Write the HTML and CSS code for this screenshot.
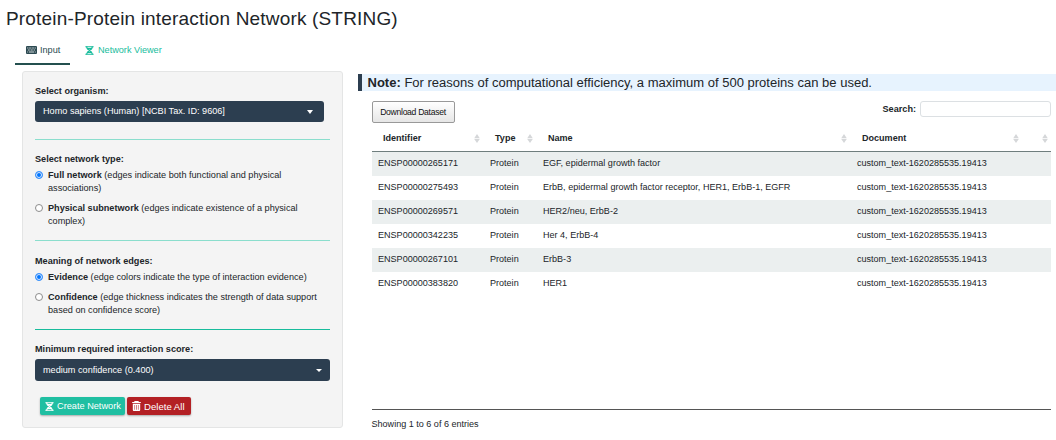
FILE: index.html
```html
<!DOCTYPE html>
<html lang="en">
<head>
<meta charset="utf-8">
<title>Protein-Protein interaction Network</title>
<link rel="stylesheet" href="styles.css">
</head>
<body>
<svg class="defs" width="0" height="0">
  <symbol id="dna" viewBox="0 0 10 10"><path d="M0.4 .8H9.6M0.4 9.2H9.6M2.3 2.9H7.7M2.3 7.1H7.7" stroke="currentColor" stroke-width="1.2" fill="none"/><path d="M1.7 .5C1.7 5 8.3 5 8.3 9.5M8.3 .5C8.3 5 1.7 5 1.7 9.5" stroke="currentColor" stroke-width="1.4" fill="none"/></symbol>
  <symbol id="trash" viewBox="0 0 10 11"><path d="M.2 1.7H9.8M3.2 1.5V.5H6.8V1.5" stroke="currentColor" stroke-width="1.2" fill="none"/><path fill-rule="evenodd" fill="currentColor" d="M.9 3H9.1V10Q9.1 11 8.1 11H1.9Q.9 11 .9 10ZM2.8 4.3V9.6H3.4V4.3ZM4.7 4.3V9.6H5.3V4.3ZM6.6 4.3V9.6H7.2V4.3Z"/></symbol>
  <symbol id="sort" viewBox="0 0 6 9"><path fill="currentColor" d="M3 0L5.8 4.2H.2ZM3 9L5.8 4.9H.2Z"/></symbol>
</svg>
<h1 class="title">Protein-Protein interaction Network (STRING)</h1>
<nav class="tabs">
  <a class="tab active"><svg class="keyboard" viewBox="0 0 11 8"><rect width="11" height="8" rx="1" fill="currentColor"/><path d="M1.3 2H9.8M1.9 4H9.2" stroke="#fff" stroke-width=".9" stroke-dasharray=".9 .6"/><path d="M1.3 6H2.2M3 6H8M8.8 6H9.7" stroke="#fff" stroke-width=".8"/></svg>Input</a>
  <a class="tab"><svg class="dna"><use href="#dna"/></svg>Network Viewer</a>
</nav>
<main class="layout">
  <form class="panel">
    <div class="label">Select organism:</div>
    <div class="select organism"><span>Homo sapiens (Human) [NCBI Tax. ID: 9606]</span><i class="caret"></i></div>
    <hr class="rule first">
    <div class="label">Select network type:</div>
    <label class="option"><i class="radio on"></i><span><b>Full network</b> (edges indicate both functional and physical<br>associations)</span></label>
    <label class="option"><i class="radio"></i><span><b>Physical subnetwork</b> (edges indicate existence of a physical<br>complex)</span></label>
    <hr class="rule second">
    <div class="label">Meaning of network edges:</div>
    <label class="option"><i class="radio on"></i><span><b>Evidence</b> (edge colors indicate the type of interaction evidence)</span></label>
    <label class="option"><i class="radio"></i><span><b>Confidence</b> (edge thickness indicates the strength of data support<br>based on confidence score)</span></label>
    <hr class="rule third">
    <div class="label">Minimum required interaction score:</div>
    <div class="select score"><span>medium confidence (0.400)</span><i class="caret small"></i></div>
    <div class="actions">
      <button type="button" class="btn create"><svg class="dna"><use href="#dna"/></svg>Create Network</button>
      <button type="button" class="btn delete"><svg class="trash"><use href="#trash"/></svg>Delete All</button>
    </div>
  </form>
  <section class="results">
    <p class="note"><b>Note:</b> For reasons of computational efficiency, a maximum of 500 proteins can be used.</p>
    <div class="data">
      <div class="toolbar">
        <button type="button" class="download">Download Dataset</button>
        <label class="search">Search:<input type="text"></label>
      </div>
      <div class="scroll">
        <table class="table">
          <colgroup><col class="c-id"><col class="c-type"><col class="c-name"><col class="c-doc"><col class="c-end"></colgroup>
          <thead><tr>
            <th><div class="head">Identifier<svg class="sort"><use href="#sort"/></svg></div></th>
            <th><div class="head">Type<svg class="sort"><use href="#sort"/></svg></div></th>
            <th><div class="head">Name<svg class="sort"><use href="#sort"/></svg></div></th>
            <th><div class="head">Document<svg class="sort"><use href="#sort"/></svg></div></th>
            <th><div class="head"><svg class="sort"><use href="#sort"/></svg></div></th>
          </tr></thead>
          <tbody>
            <tr><td>ENSP00000265171</td><td>Protein</td><td>EGF, epidermal growth factor</td><td>custom_text-1620285535.19413</td><td></td></tr>
            <tr><td>ENSP00000275493</td><td>Protein</td><td>ErbB, epidermal growth factor receptor, HER1, ErbB-1, EGFR</td><td>custom_text-1620285535.19413</td><td></td></tr>
            <tr><td>ENSP00000269571</td><td>Protein</td><td>HER2/neu, ErbB-2</td><td>custom_text-1620285535.19413</td><td></td></tr>
            <tr><td>ENSP00000342235</td><td>Protein</td><td>Her 4, ErbB-4</td><td>custom_text-1620285535.19413</td><td></td></tr>
            <tr><td>ENSP00000267101</td><td>Protein</td><td>ErbB-3</td><td>custom_text-1620285535.19413</td><td></td></tr>
            <tr><td>ENSP00000383820</td><td>Protein</td><td>HER1</td><td>custom_text-1620285535.19413</td><td></td></tr>
          </tbody>
        </table>
      </div>
      <div class="info">Showing 1 to 6 of 6 entries</div>
    </div>
  </section>
</main>
</body>
</html>
```
FILE: styles.css
```css
* { box-sizing: border-box; }
body { margin: 0; height: 440px; overflow: hidden; background: #fff; color: #212529; font: 9.13px/13px "Liberation Sans", Arial, sans-serif; }
.defs { display: block; }
svg { flex: none; }
.title { margin: 0; padding: 7px 0 0 6px; height: 38px; font-size: 19px; line-height: 24px; font-weight: 400; letter-spacing: .17px; white-space: nowrap; }
.tabs { display: flex; padding-left: 15px; height: 27px; }
.tab { display: flex; align-items: center; height: 27px; padding: 0 11px 1px; color: #18bc9c; border-bottom: 2px solid transparent; white-space: nowrap; }
.tab.active { width: 55px; color: #2c4a52; border-bottom-color: #24504f; }
.tab + .tab { padding-left: 15px; }
.keyboard { width: 11px; height: 8px; margin-right: 3px; }
.dna { width: 9px; height: 9px; margin-right: 4px; }
.layout { display: flex; align-items: flex-start; padding: 6px 0 0 22px; }
.panel { width: 321px; height: 357px; padding: 13px 12px 0; border: 1px solid #e4e5e5; border-radius: 3px; background: #f4f4f4; margin-right: 15px; flex: none; }
.label { font-weight: 700; margin-bottom: 3px; }
.select { display: flex; align-items: center; justify-content: space-between; padding: 0 11px 0 8px; border-radius: 3px; background: #2c3e50; color: #fff; }
.organism { width: 289px; height: 21px; }
.score { height: 22px; padding-right: 8px; }
.caret { border: 3.5px solid transparent; border-top: 4px solid #fff; border-bottom: 0; }
.caret.small { border-width: 3px 3px 0; }
.rule { border: 0; height: 1px; background: #8bdecd; }
.first { margin: 17px 0 13px; }
.second { margin: 12px 0 14px; }
.third { margin: 12px 0 13px; background: #18bc9c; }
.option { display: flex; margin-top: 7px; white-space: nowrap; }
.label + .option { margin-top: 0; }
.radio { flex: none; width: 8px; height: 8px; margin: 2px 5px 0 0; border: 1px solid #8d8d8d; border-radius: 50%; background: #fff; }
.radio.on { border-color: #3f93fa; background: #0075ff; box-shadow: inset 0 0 0 1px #d9eafe; }
.actions { display: flex; gap: 2px; padding: 16px 0 0 5px; }
.btn { display: flex; align-items: center; height: 18px; padding: 0 5px; border: 0; border-radius: 2px; color: #fff; font: 9.2px/13px "Liberation Sans", Arial, sans-serif; white-space: nowrap; box-shadow: 0 1px 2px rgba(0,0,0,.3); }
.btn .dna { margin-right: 3px; }
.create { width: 85px; background: #20bfa2; }
.delete { width: 64px; background: #b32024; font-size: 9.6px; }
.trash { width: 9px; height: 10px; margin-right: 3px; }
.results { flex: 1; min-width: 0; padding-top: 3px; }
.note { margin: 0; height: 17px; padding-left: 5.5px; border-left: 4px solid #2c3e50; background: #e7f3fe; font-size: 13.03px; line-height: 17px; white-space: nowrap; }
.data { padding: 10px 5px 0 13.5px; }
.toolbar { display: flex; justify-content: space-between; align-items: flex-start; height: 24px; }
.download { width: 83px; height: 22px; padding: 0 0 1px; border: 1px solid #999; border-radius: 2px; background: linear-gradient(#fff, #e6e6e6); color: #111; font: 8.6px/12px "Liberation Sans", Arial, sans-serif; letter-spacing: -.29px; }
.search { display: flex; align-items: center; gap: 4px; font-weight: 700; }
.search input { width: 131px; height: 16px; border: 1px solid #dce0e3; border-radius: 3px; background: #fff; }
.scroll { height: 285px; border-bottom: 1px solid #555; }
.table { width: 100%; table-layout: fixed; border-collapse: separate; border-spacing: 0; font-size: 9.05px; }
.c-id { width: 112px; }
.c-type { width: 53px; }
.c-name { width: 314px; }
.c-doc { width: 172px; }
th { height: 27px; padding: 0 3.5px 0 11.5px; border-bottom: 1px solid #6f7e7e; text-align: left; }
th:last-child { padding-left: 0; }
.head { display: flex; align-items: center; justify-content: space-between; }
.head .sort:only-child { margin-left: auto; }
.sort { width: 6px; height: 9px; color: #d5d7d9; }
td { height: 24px; padding: 0 0 1px 6.5px; white-space: nowrap; }
tbody tr:nth-child(odd) { background: #ebefef; }
.info { padding-top: 8px; font-size: 9.05px; }
```
